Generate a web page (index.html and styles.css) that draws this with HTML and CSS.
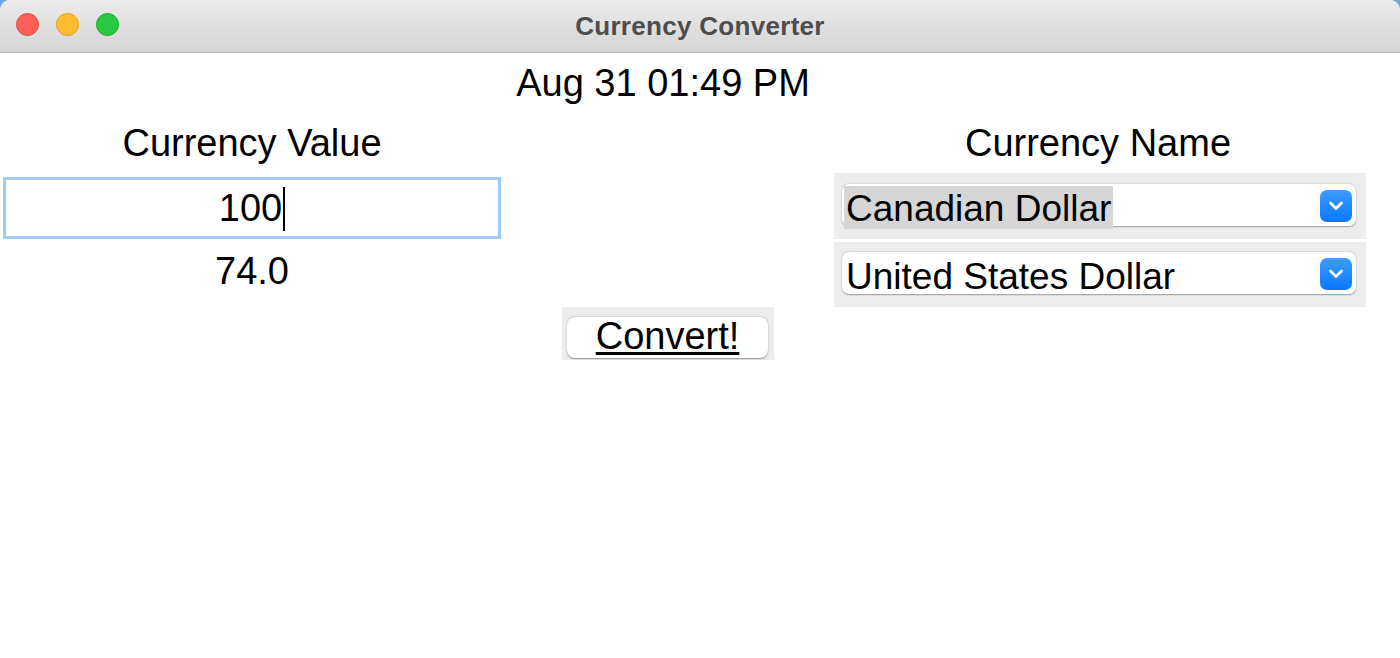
FILE: index.html
```html
<!DOCTYPE html>
<html>
<head>
<meta charset="utf-8">
<link rel="stylesheet" href="styles.css">
</head>
<body>
<div class="window">
  <div class="titlebar">
    <div class="lights">
      <span class="light red"></span>
      <span class="light yellow"></span>
      <span class="light green"></span>
    </div>
    <div class="title">Currency Converter</div>
  </div>
  <div class="content">
    <div class="date">Aug 31 01:49 PM</div>
    <div class="label lbl-left">Currency Value</div>
    <div class="label lbl-right">Currency Name</div>
    <div class="entry"><span class="entry-text">100</span><span class="caret"></span></div>
    <div class="selbox sel1">
      <div class="select"><span class="sel-text hl">Canadian Dollar</span>
        <span class="arrow"><svg width="18" height="14" viewBox="0 0 18 14"><path d="M3.5 4 L9 9.5 L14.5 4" fill="none" stroke="#fff" stroke-width="2.8" stroke-linecap="round" stroke-linejoin="round"/></svg></span>
      </div>
    </div>
    <div class="result">74.0</div>
    <div class="selbox sel2">
      <div class="select"><span class="sel-text">United States Dollar</span>
        <span class="arrow"><svg width="18" height="14" viewBox="0 0 18 14"><path d="M3.5 4 L9 9.5 L14.5 4" fill="none" stroke="#fff" stroke-width="2.8" stroke-linecap="round" stroke-linejoin="round"/></svg></span>
      </div>
    </div>
    <div class="btnbox"><div class="button">Convert!</div></div>
  </div>
</div>
</body>
</html>
```
FILE: styles.css
```css
html, body {
  margin: 0;
  padding: 0;
  width: 1400px;
  height: 658px;
  overflow: hidden;
  background: #6ea6e2;
}
.window {
  width: 1400px;
  height: 658px;
  background: #ffffff;
  border-radius: 10px 10px 0 0;
  overflow: hidden;
  font-family: "Liberation Sans", Arial, sans-serif;
  color: #000;
}
.titlebar {
  height: 52px;
  border-bottom: 1px solid #b4b4b4;
  background: linear-gradient(#ebebeb, #d5d5d5);
  display: flex;
  align-items: center;
  justify-content: center;
  position: relative;
}
.lights {
  position: absolute;
  left: 16px;
  top: 13px;
  display: flex;
  gap: 17px;
}
.light {
  width: 23px;
  height: 23px;
  border-radius: 50%;
  box-sizing: border-box;
}
.red { background: #fe5f57; border: 1px solid #e2463f; }
.yellow { background: #febc2e; border: 1px solid #e1a116; }
.green { background: #28c840; border: 1px solid #17a92b; }
.title {
  font-weight: bold;
  font-size: 26px;
  color: #4d4d4d;
  letter-spacing: 0.3px;
  margin-top: 1px;
}
.content {
  display: grid;
  grid-template-columns: 504px 330px 532px;
  grid-template-rows: 68px 52px 69px 65px 60px;
  font-size: 38px;
  line-height: 42px;
}
.date {
  grid-column: 1 / 4;
  grid-row: 1;
  text-align: center;
  padding-top: 9px;
  padding-right: 40px;
}
.label {
  grid-row: 2;
  text-align: center;
  padding-top: 1px;
}
.lbl-left { grid-column: 1; }
.lbl-right { grid-column: 3; padding-right: 4px; }
.entry {
  grid-column: 1;
  grid-row: 3;
  margin: 4px 3px 3px 3px;
  border: 3px solid #9fcaf6;
  box-sizing: border-box;
  height: 62px;
  display: flex;
  align-items: center;
  justify-content: center;
}
.caret {
  width: 2px;
  height: 44px;
  background: #000;
  margin-left: 1px;
  margin-top: 2px;
}
.selbox {
  grid-column: 3;
  background: #ececec;
  padding: 11px 10px 0 8px;
  box-sizing: border-box;
}
.sel1 { grid-row: 3; height: 66px; }
.sel2 { grid-row: 4; height: 65px; padding-top: 10px; }
.select {
  height: 42px;
  background: #fff;
  border-radius: 7px;
  box-shadow: 0 0.5px 1.5px rgba(0,0,0,0.35);
  display: flex;
  align-items: flex-start;
  justify-content: space-between;
  padding-left: 2px;
  padding-right: 4px;
  font-size: 37px;
}
.sel-text {
  height: 43px;
  line-height: 45px;
  margin-top: 2px;
  padding: 0 2px;
}
.hl { background: #d6d6d6; }
.arrow {
  width: 32px;
  height: 32px;
  margin-top: 6px;
  border-radius: 7px;
  background: linear-gradient(#3d9cff, #0a78fe);
  display: flex;
  align-items: center;
  justify-content: center;
}
.result {
  grid-column: 1;
  grid-row: 4;
  text-align: center;
  padding-top: 8px;
}
.btnbox {
  grid-column: 2;
  grid-row: 5;
  justify-self: start;
  margin-left: 58px;
  width: 212px;
  height: 53px;
  background: #ececec;
  padding: 10px 6px 0 5px;
  box-sizing: border-box;
}
.button {
  height: 41px;
  background: #fff;
  border-radius: 8px;
  box-shadow: 0 0.5px 1.5px rgba(0,0,0,0.4);
  text-align: center;
  line-height: 38px;
  text-decoration: underline;
  text-decoration-thickness: 3px;
  text-underline-offset: 3px;
}
```
